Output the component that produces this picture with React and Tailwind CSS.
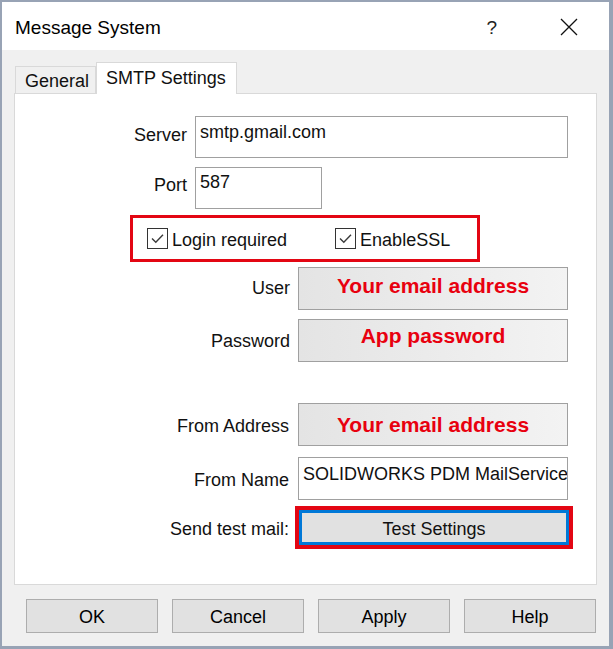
import React from "react";

function CheckBox({ label, className = "" }) {
  return (
    <div className={`flex items-center ${className}`}>
      <div className="w-[21px] h-[21px] border border-[#333] bg-white flex items-center justify-center">
        <svg width="15" height="15" viewBox="0 0 15 15">
          <path d="M2 7.5 L5.8 11.2 L13 3.8" fill="none" stroke="#3a3a3a" strokeWidth="1.4" />
        </svg>
      </div>
      <span className="ml-[4px] text-[18px] leading-[21px] pt-[3px]">{label}</span>
    </div>
  );
}

function RedField({ text, pt = "pt-[6px]" }) {
  return (
    <div
      className={`ml-[8px] w-[270px] h-[43px] border border-[#a0a0a0] bg-linear-to-r from-[#e4e4e4] to-[#f3f3f3] text-center ${pt}`}
    >
      <span className="text-[21px] leading-[24px] font-bold text-[#e8000f]">{text}</span>
    </div>
  );
}

function Label({ text, pt = "pt-[3px]" }) {
  return <div className={`w-[275px] text-right text-[18px] leading-[21px] ${pt}`}>{text}</div>;
}

function DialogButton({ children }) {
  return (
    <button className="w-[132px] h-[34px] bg-[#e1e1e1] border border-[#adadad] text-[18px] leading-[21px] pt-[3px] text-black">
      {children}
    </button>
  );
}

export default function App() {
  return (
    <div className="w-[613px] h-[649px] bg-[#f0f0f0] border-l-2 border-t-2 border-r-4 border-b-[3px] border-[#98a3b5] flex flex-col font-['Liberation_Sans',Arial,sans-serif] text-[#111]">
      {/* title bar */}
      <div className="h-[48px] bg-white flex items-center pl-[13px] shrink-0">
        <span className="text-[19px] leading-[22px] pt-[4px] text-black">Message System</span>
        <span className="ml-auto mr-[63px] text-[19px] leading-[22px] pt-[4px] text-[#222]">?</span>
        <svg className="mr-[31px] mt-[2px]" width="18" height="18" viewBox="0 0 18 18">
          <path d="M1 1 L17 17 M17 1 L1 17" stroke="#111" strokeWidth="1.3" />
        </svg>
      </div>

      {/* tabs */}
      <div className="mt-[12px] ml-[13px] flex items-end h-[31px]">
        <div className="w-[81px] h-[27px] border border-b-0 border-[#d9d9d9] bg-[#f0f0f0] flex items-center pl-[9px] pt-[2px] text-[18px] leading-[21px]">
          General
        </div>
        <div className="relative z-10 -mb-px w-[141px] h-[32px] border border-b-0 border-[#d9d9d9] bg-white pl-[9px] pt-[5px] text-[18px] leading-[21px]">
          SMTP Settings
        </div>
      </div>

      {/* panel */}
      <div className="ml-[12px] w-[583px] h-[492px] border border-[#d9d9d9] bg-white flex flex-col">
        <div className="mt-[22px] flex items-start">
          <div className="w-[172px] text-right text-[18px] leading-[21px] pt-[9px]">Server</div>
          <div className="ml-[8px] w-[373px] h-[42px] border border-[#a0a0a0] pl-[4px] pt-[5px] text-[18px] leading-[21px]">
            smtp.gmail.com
          </div>
        </div>
        <div className="mt-[9px] flex items-start">
          <div className="w-[172px] text-right text-[18px] leading-[21px] pt-[8px]">Port</div>
          <div className="ml-[8px] w-[127px] h-[42px] border border-[#a0a0a0] pl-[4px] pt-[4px] text-[18px] leading-[21px]">
            587
          </div>
        </div>

        <div className="mt-[6px] ml-[115px] w-[350px] h-[47px] border-[3px] border-[#e30613] flex items-center pl-[14px]">
          <CheckBox label="Login required" />
          <CheckBox label="EnableSSL" className="ml-[48px]" />
        </div>

        <div className="mt-[5px] flex items-center">
          <Label text="User" pt="pt-0" />
          <RedField text="Your email address" pt="pt-[6px]" />
        </div>
        <div className="mt-[9px] flex items-center">
          <Label text="Password" pt="pt-[2px]" />
          <RedField text="App password" pt="pt-[4px]" />
        </div>

        <div className="mt-[41px] flex items-center">
          <div className="w-[274px] text-right text-[18px] leading-[21px] pt-[3px]">From Address</div>
          <div className="ml-[9px] w-[270px] h-[43px] border border-[#a0a0a0] bg-linear-to-r from-[#e4e4e4] to-[#f3f3f3] flex items-center justify-center">
            <span className="text-[21px] leading-[24px] font-bold text-[#e8000f]">Your email address</span>
          </div>
        </div>
        <div className="mt-[11px] flex items-center">
          <div className="w-[274px] text-right text-[18px] leading-[21px] pt-[3px]">From Name</div>
          <div className="ml-[9px] w-[270px] h-[43px] border border-[#a0a0a0] pl-[4px] pt-[6px] text-[18px] leading-[21px] whitespace-nowrap overflow-hidden">
            SOLIDWORKS PDM MailService
          </div>
        </div>
        <div className="mt-[6px] flex items-center">
          <div className="w-[274px] text-right text-[18px] leading-[21px] pt-[4px]">Send test mail:</div>
          <div className="ml-[6px] w-[278px] h-[43px] border-4 border-[#e30613]">
            <button className="w-full h-full border-[3px] border-[#0078d7] bg-[#e1e1e1] text-[18px] leading-[21px] pt-[3px] text-[#111]">
              Test Settings
            </button>
          </div>
        </div>
      </div>

      {/* footer buttons */}
      <div className="mt-[14px] ml-[24px] flex gap-[14px]">
        <DialogButton>OK</DialogButton>
        <DialogButton>Cancel</DialogButton>
        <DialogButton>Apply</DialogButton>
        <DialogButton>Help</DialogButton>
      </div>
    </div>
  );
}
